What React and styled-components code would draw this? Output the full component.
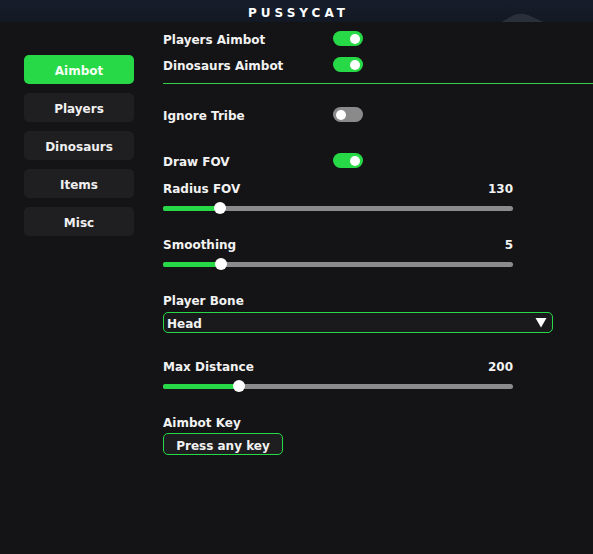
import React from "react";
import styled, { createGlobalStyle } from "styled-components";

const GREEN = "#27d946";

const GlobalStyle = createGlobalStyle`
  html, body {
    margin: 0;
    padding: 0;
    background: #141416;
  }
  body {
    font-family: "DejaVu Sans", "Liberation Sans", sans-serif;
    font-weight: bold;
    font-size: 12px;
    color: #f2f2f2;
  }
`;

const Page = styled.div`
  width: 593px;
  height: 554px;
  background: #141416;
  overflow: hidden;
`;

const TitleBar = styled.div`
  position: relative;
  height: 22px;
  box-sizing: border-box;
  background: linear-gradient(180deg, #161c29 0%, #131924 100%);
  display: flex;
  align-items: center;
  justify-content: center;
  padding: 3px 0 0 4px;
  font-size: 12px;
  letter-spacing: 4px;
  color: #ffffff;
  overflow: hidden;
`;

const Hill = styled.svg`
  position: absolute;
  left: 498px;
  top: 12px;
`;

const Body = styled.div`
  display: flex;
  gap: 29px;
  padding-left: 24px;
`;

const Sidebar = styled.nav`
  display: flex;
  flex-direction: column;
  gap: 9px;
  padding-top: 33px;
  width: 110px;
`;

const TabButton = styled.div`
  height: 29px;
  box-sizing: border-box;
  padding-top: 3px;
  border-radius: 5px;
  display: flex;
  align-items: center;
  justify-content: center;
  background: ${p => (p.$active ? GREEN : "#1f1f21")};
  color: ${p => (p.$active ? "#f4fff4" : "#f0f0f0")};
`;

const Content = styled.div`
  display: flex;
  flex-direction: column;
  padding-top: 9px;
  flex: 1;
`;

const ToggleRow = styled.div`
  display: flex;
  align-items: center;
  height: 15px;
  margin-top: ${p => p.$mt || 0}px;
`;

const RowLabel = styled.span`
  width: 170px;
  padding-top: 3px;
`;

const Switch = styled.div`
  width: 30px;
  height: 15px;
  border-radius: 8px;
  background: ${p => (p.$on ? GREEN : "#8a8a8a")};
  display: flex;
  align-items: center;
  justify-content: ${p => (p.$on ? "flex-end" : "flex-start")};
  padding: 0 3px;
  box-sizing: border-box;
  &::after {
    content: "";
    width: 10px;
    height: 10px;
    border-radius: 50%;
    background: #ffffff;
  }
`;

const Divider = styled.div`
  height: 1px;
  background: #38cc4c;
  margin-top: 11px;
`;

const Label = styled.div`
  height: 15px;
  line-height: 15px;
  padding-top: 2px;
  box-sizing: content-box;
  margin-top: ${p => (p.$mt || 0) - 1}px;
  width: 350px;
  display: flex;
  justify-content: space-between;
`;

const Track = styled.div`
  position: relative;
  width: 350px;
  height: 12px;
  margin-top: 5px;
  display: flex;
  align-items: center;
`;

const Rail = styled.div`
  width: 100%;
  height: 5px;
  border-radius: 3px;
  background: #8b8b8b;
  overflow: hidden;
`;

const Fill = styled.div`
  height: 100%;
  background: ${GREEN};
`;

const Thumb = styled.div`
  position: absolute;
  top: 0;
  width: 12px;
  height: 12px;
  margin-left: -6px;
  border-radius: 50%;
  background: #ffffff;
`;

const Select = styled.div`
  margin-top: 3px;
  width: 390px;
  height: 21px;
  box-sizing: border-box;
  border: 1px solid ${GREEN};
  border-radius: 5px;
  background: #1a1a1c;
  display: flex;
  align-items: center;
  justify-content: space-between;
  padding: 0 5px 0 3px;
  span {
    padding-top: 2px;
  }
`;

const KeyButton = styled.div`
  margin-top: 2px;
  width: 120px;
  height: 22px;
  box-sizing: border-box;
  border: 1px solid ${GREEN};
  border-radius: 5px;
  background: #1e1e20;
  display: flex;
  align-items: center;
  justify-content: center;
  padding-top: 3px;
`;

const Slider = ({ label, value, pct, mt }) => (
  <>
    <Label $mt={mt}>
      <span>{label}</span>
      <span>{value}</span>
    </Label>
    <Track>
      <Rail>
        <Fill style={{ width: `${pct}%` }} />
      </Rail>
      <Thumb style={{ left: `${pct}%` }} />
    </Track>
  </>
);

const tabs = ["Aimbot", "Players", "Dinosaurs", "Items", "Misc"];

export default function App() {
  return (
    <Page>
      <GlobalStyle />
      <TitleBar>
        PUSSYCAT
        <Hill width="50" height="12" viewBox="0 0 50 12">
          <path d="M0 12 L14 4 Q22 0 30 3 L50 12 Z" fill="#2a303b" />
        </Hill>
      </TitleBar>
      <Body>
        <Sidebar>
          {tabs.map((t, i) => (
            <TabButton key={t} $active={i === 0}>
              {t}
            </TabButton>
          ))}
        </Sidebar>
        <Content>
          <ToggleRow>
            <RowLabel>Players Aimbot</RowLabel>
            <Switch $on />
          </ToggleRow>
          <ToggleRow $mt={11}>
            <RowLabel>Dinosaurs Aimbot</RowLabel>
            <Switch $on />
          </ToggleRow>
          <Divider />
          <ToggleRow $mt={23}>
            <RowLabel>Ignore Tribe</RowLabel>
            <Switch />
          </ToggleRow>
          <ToggleRow $mt={31}>
            <RowLabel>Draw FOV</RowLabel>
            <Switch $on />
          </ToggleRow>
          <Slider label="Radius FOV" value="130" pct={16.3} mt={13} />
          <Slider label="Smoothing" value="5" pct={16.6} mt={23} />
          <Label $mt={23}>Player Bone</Label>
          <Select>
            <span>Head</span>
            <svg width="12" height="11" viewBox="0 0 12 11">
              <path d="M0.5 1 L11.5 1 L6 10.5 Z" fill="#ffffff" />
            </svg>
          </Select>
          <Slider label="Max Distance" value="200" pct={21.7} mt={26} />
          <Label $mt={23}>Aimbot Key</Label>
          <KeyButton>Press any key</KeyButton>
        </Content>
      </Body>
    </Page>
  );
}
